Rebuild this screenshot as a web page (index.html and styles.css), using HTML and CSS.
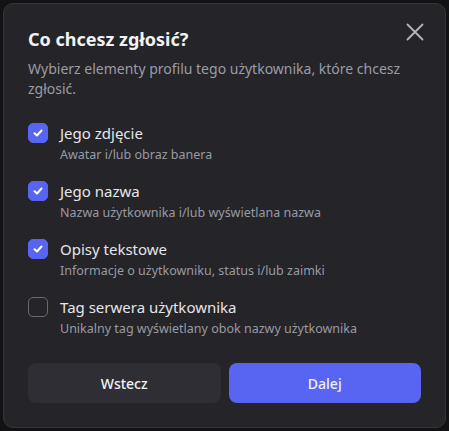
FILE: index.html
```html
<!DOCTYPE html>
<html lang="pl">
<head>
<meta charset="utf-8">
<title>Zgłoś</title>
<link rel="stylesheet" href="styles.css">
</head>
<body>
<div class="modal">
  <button class="close" aria-label="Zamknij">
    <svg width="24" height="24" viewBox="0 0 24 24"><path d="M4.5 4.5L19.5 19.5M19.5 4.5L4.5 19.5" stroke="currentColor" stroke-width="1.8" stroke-linecap="round" fill="none"/></svg>
  </button>
  <h1 class="title">Co chcesz zgłosić?</h1>
  <p class="subtitle">Wybierz elementy profilu tego użytkownika, które chcesz zgłosić.</p>
  <div class="options">
    <div class="option">
      <span class="box checked"><svg width="12" height="12" viewBox="0 0 12 12"><path d="M2.5 6.2L5 8.5L9.5 3.5" stroke="#fff" stroke-width="2" fill="none" stroke-linecap="round" stroke-linejoin="round"/></svg></span>
      <div class="text">
        <div class="label">Jego zdjęcie</div>
        <div class="desc">Awatar i/lub obraz banera</div>
      </div>
    </div>
    <div class="option">
      <span class="box checked"><svg width="12" height="12" viewBox="0 0 12 12"><path d="M2.5 6.2L5 8.5L9.5 3.5" stroke="#fff" stroke-width="2" fill="none" stroke-linecap="round" stroke-linejoin="round"/></svg></span>
      <div class="text">
        <div class="label">Jego nazwa</div>
        <div class="desc">Nazwa użytkownika i/lub wyświetlana nazwa</div>
      </div>
    </div>
    <div class="option">
      <span class="box checked"><svg width="12" height="12" viewBox="0 0 12 12"><path d="M2.5 6.2L5 8.5L9.5 3.5" stroke="#fff" stroke-width="2" fill="none" stroke-linecap="round" stroke-linejoin="round"/></svg></span>
      <div class="text">
        <div class="label">Opisy tekstowe</div>
        <div class="desc">Informacje o użytkowniku, status i/lub zaimki</div>
      </div>
    </div>
    <div class="option">
      <span class="box"></span>
      <div class="text">
        <div class="label">Tag serwera użytkownika</div>
        <div class="desc">Unikalny tag wyświetlany obok nazwy użytkownika</div>
      </div>
    </div>
  </div>
  <div class="actions">
    <button class="btn secondary">Wstecz</button>
    <button class="btn primary">Dalej</button>
  </div>
</div>
</body>
</html>
```

FILE: styles.css
```css
* { box-sizing: border-box; }
html, body { margin: 0; padding: 0; }
body {
  background: #121214;
  font-family: "Noto Sans", "Open Sans", sans-serif;
  width: 449px;
  height: 431px;
  padding: 3px;
  overflow: hidden;
}
.modal {
  position: relative;
  width: 443px;
  height: 425px;
  background: #242429;
  border: 1px solid #34343a;
  border-radius: 10px;
  padding: 23px 24px 24px 24px;
  color: #ededf0;
}
.close {
  position: absolute;
  top: 16px;
  right: 18px;
  width: 24px;
  height: 24px;
  padding: 0;
  border: none;
  background: none;
  color: #b5b5bd;
  display: flex;
}
.title {
  margin: 0;
  font-size: 18px;
  line-height: 24px;
  font-weight: 700;
  color: #f2f2f4;
}
.subtitle {
  margin: 8px 0 0 0;
  font-size: 14px;
  line-height: 20px;
  color: #9c9ca5;
}
.options {
  margin-top: 24px;
  display: flex;
  flex-direction: column;
  gap: 18px;
}
.option {
  display: flex;
  gap: 12px;
  align-items: flex-start;
}
.box {
  flex: none;
  width: 20px;
  height: 20px;
  border-radius: 5px;
  border: 1px solid #6a6a72;
  display: flex;
  align-items: center;
  justify-content: center;
}
.box.checked {
  background: #5865f2;
  border-color: #5865f2;
}
.label {
  font-size: 15px;
  line-height: 20px;
  color: #e6e6ea;
}
.desc {
  margin-top: 4px;
  font-size: 12.5px;
  line-height: 16px;
  color: #9a9aa3;
}
.actions {
  margin-top: 26px;
  display: flex;
  gap: 8px;
}
.btn {
  flex: 1;
  height: 40px;
  border: none;
  border-radius: 8px;
  font-family: inherit;
  font-size: 14px;
  font-weight: 500;
  color: #f2f2f4;
}
.secondary { background: #2e2e34; }
.primary { background: #5865f2; }
```
